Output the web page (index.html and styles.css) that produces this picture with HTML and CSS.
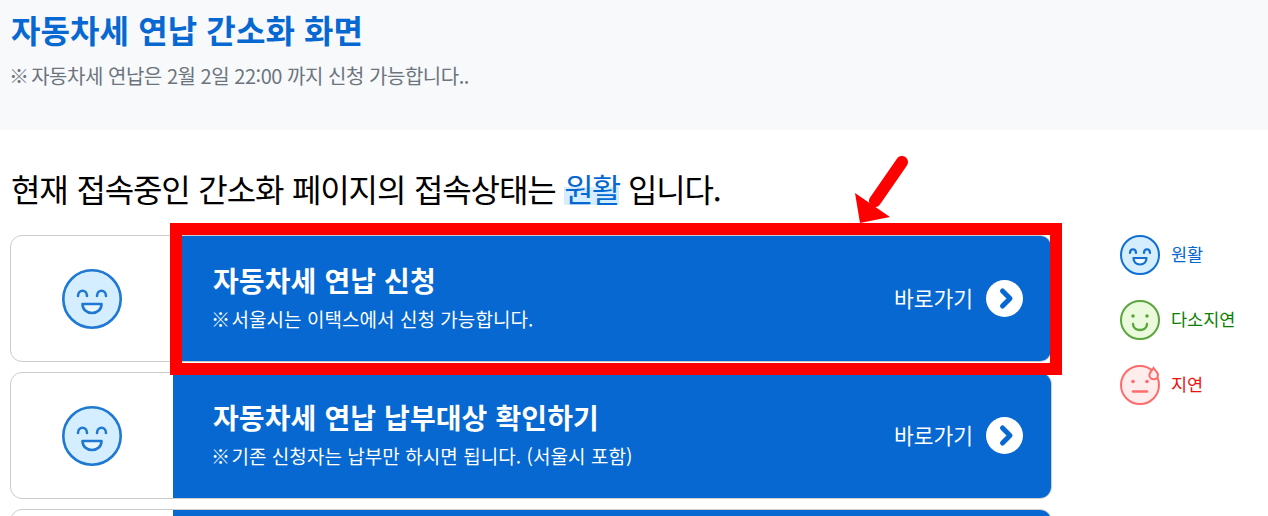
FILE: index.html
```html
<!DOCTYPE html>
<html lang="ko">
<head>
    <meta charset="UTF-8">
    <title>자동차세 연납 간소화 화면</title>
    <link rel="stylesheet" href="styles.css">
</head>
<body>

<svg class="defs" width="0" height="0">
    <symbol id="faceGood" viewBox="0 0 60 60">
        <circle cx="30" cy="30" r="28.7" fill="#d4eeff" stroke="#1f78d1" stroke-width="2.6"/>
        <path d="M16 27c0-7 9-7 9 0M35 27c0-7 9-7 9 0" fill="none" stroke="#1f78d1" stroke-width="2.6" stroke-linecap="round"/>
        <path d="M20.500 35h19c0 5.500-4 9-9.500 9s-9.500-3.500-9.500-9z" fill="#e8f6ff" stroke="#1f78d1" stroke-width="2.6" stroke-linejoin="round"/>
    </symbol>
    <symbol id="faceGoodSmall" viewBox="0 0 40 40">
        <circle cx="20" cy="20" r="19" fill="#d4eeff" stroke="#0f6fd2" stroke-width="2"/>
        <path d="M10 18c0-5 6-5 6 0M24 18c0-5 6-5 6 0" fill="none" stroke="#0f6fd2" stroke-width="2.200" stroke-linecap="round"/>
        <path d="M13.500 23h13c0 4-2.800 6.500-6.500 6.500s-6.500-2.500-6.500-6.500z" fill="#f2faff" stroke="#0f6fd2" stroke-width="2.200" stroke-linejoin="round"/>
    </symbol>
    <symbol id="faceSoso" viewBox="0 0 40 40">
        <circle cx="20" cy="20" r="19" fill="#ebfadd" stroke="#5aa63c" stroke-width="2"/>
        <circle cx="13" cy="16" r="1.800" fill="#5aa63c"/>
        <circle cx="27" cy="16" r="1.800" fill="#5aa63c"/>
        <path d="M13 24c0 8 14 8 14 0" fill="none" stroke="#5aa63c" stroke-width="2.400" stroke-linecap="round"/>
    </symbol>
    <symbol id="faceBad" viewBox="0 0 40 40">
        <circle cx="20" cy="20" r="19" fill="#ffecec" stroke="#ff6b6b" stroke-width="2"/>
        <circle cx="13" cy="16.500" r="1.800" fill="#ff6b6b"/>
        <circle cx="27" cy="16.500" r="1.800" fill="#ff6b6b"/>
        <path d="M13 26.500h14" stroke="#ff6b6b" stroke-width="2.400" stroke-linecap="round"/>
        <path d="M33.500 3c1.500 2.500 4.500 4 4.500 7a4.300 4.300 0 0 1-8.600 0c0-3 2.600-4.500 4.100-7z" fill="#ffecec" stroke="#ff6b6b" stroke-width="2"/>
    </symbol>
    <symbol id="goArrow" viewBox="0 0 37 37">
        <circle cx="18.500" cy="18.500" r="18.500" fill="#fff"/>
        <path d="M16.500 11l7.500 7.500-7.500 7.500" fill="none" stroke="#0668d0" stroke-width="5" stroke-linecap="round" stroke-linejoin="round"/>
    </symbol>
</svg>

<div class="top-box">
    <h1>자동차세 연납 간소화 화면</h1>
    <p class="top-note"><span class="ref-mark">※</span> 자동차세 연납은 2월 2일 22:00 까지 신청 가능합니다..</p>
</div>

<h2 class="status">현재 접속중인 간소화 페이지의 접속상태는 <span class="status-mark">원활</span> 입니다.</h2>

<div class="content">
    <div class="card-list">
        <a class="card" href="#">
            <div class="card-face"><svg class="face-big"><use href="#faceGood"/></svg></div>
            <div class="card-body">
                <div class="card-text">
                    <strong>자동차세 연납 신청</strong>
                    <span><span class="ref-mark">※</span> 서울시는 이택스에서 신청 가능합니다.</span>
                </div>
                <div class="card-go">바로가기 <svg class="go-icon"><use href="#goArrow"/></svg></div>
            </div>
        </a>
        <a class="card" href="#">
            <div class="card-face"><svg class="face-big"><use href="#faceGood"/></svg></div>
            <div class="card-body">
                <div class="card-text">
                    <strong>자동차세 연납 납부대상 확인하기</strong>
                    <span><span class="ref-mark">※</span> 기존 신청자는 납부만 하시면 됩니다. (서울시 포함)</span>
                </div>
                <div class="card-go">바로가기 <svg class="go-icon"><use href="#goArrow"/></svg></div>
            </div>
        </a>
        <a class="card" href="#">
            <div class="card-face"></div>
            <div class="card-body"></div>
        </a>
    </div>

    <ul class="legend">
        <li class="good"><svg class="face-small"><use href="#faceGoodSmall"/></svg>원활</li>
        <li class="soso"><svg class="face-small"><use href="#faceSoso"/></svg>다소지연</li>
        <li class="bad"><svg class="face-small"><use href="#faceBad"/></svg>지연</li>
    </ul>
</div>

<!-- red highlight drawn over the first card -->
<div class="highlight"></div>
<svg class="pointer" width="60" height="75" viewBox="0 0 60 75">
    <path d="M47 8L20 47" fill="none" stroke="#f00" stroke-width="12" stroke-linecap="round"/>
    <path d="M0 39L35 63L5 69z" fill="#f00"/>
</svg>

</body>
</html>
```

FILE: styles.css
```css
html, body {
    height: 516px;
    overflow: hidden;
}
body {
    margin: 0;
    background: #fff;
    color: #000;
    font-family: "Noto Sans CJK KR", "Noto Sans", sans-serif;
    position: relative;
}
.defs {
    position: absolute;
}
.top-box {
    height: 130px;
    box-sizing: border-box;
    padding: 6px 10px 0 11px;
    background: #f8f9fb;
}
.top-box h1 {
    margin: 0;
    font-size: 32px;
    line-height: 46px;
    font-weight: 700;
    letter-spacing: 0.1px;
    color: #0668d0;
}
.top-note {
    margin: 9px 0 0 -2px;
    font-size: 20px;
    line-height: 30px;
    letter-spacing: -0.47px;
    color: #6c757d;
}
.ref-mark {
    letter-spacing: -3px;
}
.status {
    margin: 38px 0 0 11px;
    font-size: 32px;
    line-height: 40px;
    font-weight: 400;
    letter-spacing: -1.15px;
    word-spacing: 1px;
}
.status-mark {
    color: #0668d0;
    letter-spacing: -2px;
    background: linear-gradient(transparent 47%, #d4eeff 47%, #d4eeff 87%, transparent 87%);
}
.content {
    display: flex;
    margin: 27px 0 0 10px;
}
.card-list {
    width: 1042px;
    display: flex;
    flex-direction: column;
    gap: 10px;
}
.card {
    display: flex;
    height: 127px;
    flex: none;
    box-sizing: border-box;
    border: 1px solid #ccc;
    border-radius: 12px;
    text-decoration: none;
}
.card-face {
    width: 162px;
    display: flex;
    align-items: center;
    justify-content: center;
}
.face-big {
    width: 60px;
    height: 60px;
}
.card-body {
    flex: 1;
    display: flex;
    align-items: center;
    justify-content: space-between;
    padding: 0 28px 0 40px;
    background: #0668d0;
    border-radius: 0 11px 11px 0;
    color: #fff;
}
.card-text {
    display: flex;
    flex-direction: column;
    gap: 5px;
    padding-bottom: 7px;
}
.card-text strong {
    font-size: 28px;
    line-height: 42px;
    font-weight: 700;
    letter-spacing: 0.1px;
}
.card-text span {
    font-size: 19px;
    line-height: 26px;
    letter-spacing: 0.05px;
}
.card-text .ref-mark {
    margin-left: -2px;
    letter-spacing: -4px;
}
.card-go {
    display: flex;
    align-items: flex-start;
    gap: 13px;
    font-size: 21.500px;
    line-height: 35px;
}
.go-icon {
    width: 37px;
    height: 37px;
}
.legend {
    list-style: none;
    margin: 0 0 0 68px;
    padding: 0;
    display: flex;
    flex-direction: column;
    gap: 25px;
}
.legend li {
    display: flex;
    align-items: flex-start;
    gap: 11px;
    height: 40px;
    font-size: 17.500px;
    line-height: 38px;
}
.face-small {
    width: 40px;
    height: 40px;
}
.good { color: #0668d0; }
.soso { color: #0a8000; }
.bad { color: #f01010; }

.highlight {
    position: absolute;
    left: 170px;
    top: 223px;
    width: 868px;
    height: 128px;
    border: 12px solid #f00;
}
.pointer {
    position: absolute;
    left: 855px;
    top: 154px;
}
```
